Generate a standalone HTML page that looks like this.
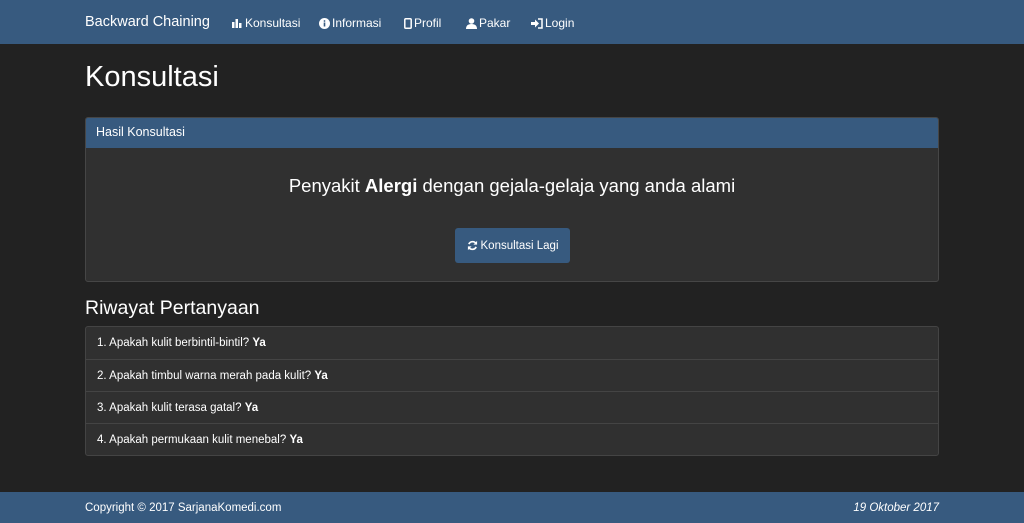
<!DOCTYPE html>
<html><head><meta charset="utf-8"><style>
*{box-sizing:border-box;margin:0;padding:0}
body{width:1024px;height:523px;background:#222;font-family:"Liberation Sans",sans-serif;color:#fff;position:relative;overflow:hidden}
.nav{position:absolute;left:0;top:0;width:1024px;height:44px;background:#375a7f}
.brand{position:absolute;left:85px;top:14px;font-size:14.5px;color:#fff}
.nav .it{position:absolute;top:16px;font-size:12px;display:flex;align-items:center;gap:2px}
h1{position:absolute;left:85px;top:61px;font-size:29px;font-weight:normal}
.panel{position:absolute;left:85px;top:117px;width:854px;height:165px;border:1px solid #464646;border-radius:3px;background:#303030;overflow:hidden}
.ph{height:31px;background:#375a7f;font-size:12.5px;padding:8px 11px;margin:-1px -1px 0;}
.pt{position:absolute;top:57px;width:100%;text-align:center;font-size:18.5px}
.btn{position:absolute;left:369px;top:110px;width:115px;height:35px;background:#375a7f;border-radius:3px;font-size:11.5px;display:flex;align-items:center;justify-content:center;gap:3px}
h3{position:absolute;left:85px;top:297px;font-size:19.5px;font-weight:normal}
.list{position:absolute;left:85px;top:326px;width:854px;border:1px solid #444;border-radius:3px;background:#303030}
.li{height:32px;padding:10px 11px;font-size:11.5px;border-top:1px solid #444}
.li:first-child{border-top:none}
.foot{position:absolute;left:0;top:492px;width:1024px;height:31px;background:#375a7f;font-size:11.5px}
.foot .l{position:absolute;left:85px;top:10px}
.foot .r{position:absolute;right:85px;top:10px;font-style:italic}
</style></head><body>
<div class="nav">
<div class="brand">Backward Chaining</div>
<div class="it" style="left:232px"><svg width="11" height="10" viewBox="0 0 11 10"><rect x="0" y="4" width="2.5" height="6" fill="#fff"/><rect x="3.5" y="1" width="2.5" height="9" fill="#fff"/><rect x="7" y="5" width="2.5" height="5" fill="#fff"/></svg>Konsultasi</div>
<div class="it" style="left:319px"><svg width="11" height="11" viewBox="0 0 11 11"><circle cx="5.5" cy="5.5" r="5.5" fill="#fff"/><rect x="4.7" y="4.5" width="1.6" height="4" fill="#375a7f"/><circle cx="5.5" cy="3" r="0.9" fill="#375a7f"/></svg>Informasi</div>
<div class="it" style="left:404px"><svg width="8" height="11" viewBox="0 0 8 11"><rect x="0.8" y="0.8" width="6.4" height="9.4" rx="1" fill="none" stroke="#fff" stroke-width="1.5"/></svg> Profil</div>
<div class="it" style="left:466px"><svg width="11" height="11" viewBox="0 0 11 11"><circle cx="5.5" cy="3" r="2.8" fill="#fff"/><path d="M0 11 Q0 6 5.5 6 Q11 6 11 11Z" fill="#fff"/></svg>Pakar</div>
<div class="it" style="left:531px"><svg width="12" height="11" viewBox="0 0 12 11"><path d="M0 4h4V1.5l4 4-4 4V7H0z" fill="#fff"/><path d="M7 1h4v9H7" fill="none" stroke="#fff" stroke-width="1.5"/></svg>Login</div>
</div>
<h1>Konsultasi</h1>
<div class="panel">
<div class="ph">Hasil Konsultasi</div>
<div class="pt">Penyakit <b>Alergi</b> dengan gejala-gelaja yang anda alami</div>
<div class="btn"><svg width="11" height="11" viewBox="0 0 12 12"><path d="M10 4A4.5 4.5 0 0 0 2 4.5M2 8A4.5 4.5 0 0 0 10 7.5" fill="none" stroke="#fff" stroke-width="1.8"/><path d="M11 1v4H7z M1 11V7h4z" fill="#fff"/></svg>Konsultasi Lagi</div>
</div>
<h3>Riwayat Pertanyaan</h3>
<div class="list">
<div class="li">1. Apakah kulit berbintil-bintil? <b>Ya</b></div>
<div class="li">2. Apakah timbul warna merah pada kulit? <b>Ya</b></div>
<div class="li">3. Apakah kulit terasa gatal? <b>Ya</b></div>
<div class="li">4. Apakah permukaan kulit menebal? <b>Ya</b></div>
</div>
<div class="foot"><div class="l">Copyright © 2017 SarjanaKomedi.com</div><div class="r">19 Oktober 2017</div></div>
</body></html>
